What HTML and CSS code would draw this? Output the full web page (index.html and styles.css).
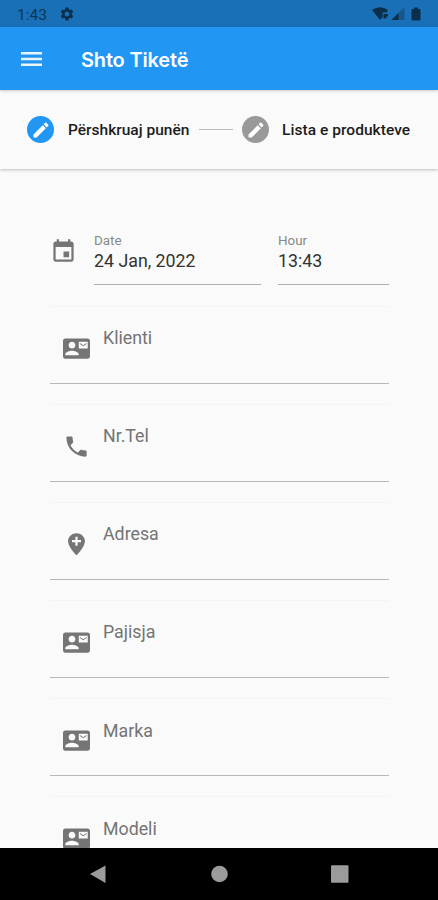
FILE: index.html
```html
<!DOCTYPE html>
<html lang="sq">
<head>
<meta charset="utf-8">
<title>Shto Tiketë</title>
<link rel="stylesheet" href="styles.css">
</head>
<body>
<svg class="defs" width="0" height="0">
  <symbol id="card" viewBox="0 0 24 24"><path d="M21 8V7l-3 2-3-2v1l3 2 3-2zm1-5H2C.9 3 0 3.9 0 5v14c0 1.1.9 2 2 2h20c1.1 0 1.99-.9 1.99-2L24 5c0-1.1-.9-2-2-2zM8 6c1.66 0 3 1.34 3 3s-1.34 3-3 3-3-1.34-3-3 1.34-3 3-3zm6 12H2v-1c0-2 4-3.1 6-3.1s6 1.1 6 3.1v1zm8-6h-8V6h8v6z"/></symbol>
  <symbol id="edit" viewBox="0 0 24 24"><path d="M3 17.25V21h3.75L17.81 9.94l-3.75-3.75L3 17.25zM20.71 7.04c.39-.39.39-1.02 0-1.41l-2.34-2.34c-.39-.39-1.02-.39-1.41 0l-1.83 1.83 3.75 3.75 1.83-1.83z"/></symbol>
</svg>
<div class="screen">
  <div class="status">
    <span class="clock">1:43</span>
    <svg class="gear" viewBox="0 0 24 24"><path d="M19.14 12.94c.04-.3.06-.61.06-.94 0-.32-.02-.64-.07-.94l2.03-1.58c.18-.14.23-.41.12-.61l-1.92-3.32c-.12-.22-.37-.29-.59-.22l-2.39.96c-.5-.38-1.03-.7-1.62-.94l-.36-2.54c-.04-.24-.24-.41-.48-.41h-3.84c-.24 0-.43.17-.47.41l-.36 2.54c-.59.24-1.13.57-1.62.94l-2.39-.96c-.22-.08-.47 0-.59.22L2.74 8.87c-.12.21-.08.47.12.61l2.03 1.58c-.05.3-.09.63-.09.94s.02.64.07.94l-2.03 1.58c-.18.14-.23.41-.12.61l1.92 3.32c.12.22.37.29.59.22l2.39-.96c.5.38 1.03.7 1.62.94l.36 2.54c.05.24.24.41.48.41h3.84c.24 0 .44-.17.47-.41l.36-2.54c.59-.24 1.13-.56 1.62-.94l2.39.96c.22.08.47 0 .59-.22l1.92-3.32c.12-.22.07-.47-.12-.61l-2.01-1.58zM12 15.6c-1.98 0-3.6-1.62-3.6-3.6s1.62-3.6 3.6-3.6 3.6 1.62 3.6 3.6-1.62 3.6-3.6 3.6z"/></svg>
    <svg class="signals" viewBox="0 0 52 16">
      <path d="M1 4Q9-1.5 17 4L15.5 6.5H11.5V11.5L9 14z"/>
      <path d="M12.5 8H17V10.5H15.500V12.5H12.5z"/>
      <path class="weak" d="M33.5 1V14H20.5z"/>
      <path d="M27.5 7V14H20.5z"/>
      <path d="M43 1.5h4v1.500h1.500q1 0 1 1v9.500q0 1-1 1h-7q-1 0-1-1V4q0-1 1-1H43z"/>
    </svg>
  </div>
  <header class="appbar">
    <svg class="menu" viewBox="0 0 21 14"><path d="M0 0h21v2.500H0zM0 5.700h21v2.500H0zM0 11.400h21v2.500H0z"/></svg>
    <h1>Shto Tiketë</h1>
  </header>
  <nav class="stepper">
    <span class="dot active"><svg><use href="#edit"/></svg></span>
    <span class="step first">Përshkruaj punën</span>
    <span class="link"></span>
    <span class="dot"><svg><use href="#edit"/></svg></span>
    <span class="step second">Lista e produkteve</span>
  </nav>
  <main class="form">
    <div class="when">
      <svg class="icon" viewBox="0 0 24 24"><path d="M17 12h-5v5h5v-5zM16 1v2H8V1H6v2H5c-1.110 0-1.990.9-1.990 2L3 19c0 1.100.89 2 2 2h14c1.100 0 2-.9 2-2V5c0-1.100-.9-2-2-2h-1V1h-2zm3 18H5V8h14v11z"/></svg>
      <div class="picker date"><label>Date</label><span>24 Jan, 2022</span></div>
      <div class="picker hour"><label>Hour</label><span>13:43</span></div>
    </div>
    <div class="field"><svg class="icon"><use href="#card"/></svg><span>Klienti</span></div>
    <div class="field"><svg class="icon" viewBox="0 0 24 24"><path d="M6.620 10.790c1.440 2.830 3.760 5.140 6.590 6.590l2.200-2.200c.27-.27.67-.36 1.020-.24 1.120.37 2.330.57 3.570.57.55 0 1 .45 1 1V20c0 .55-.45 1-1 1-9.390 0-17-7.610-17-17 0-.55.45-1 1-1h3.500c.55 0 1 .45 1 1 0 1.250.2 2.450.57 3.570.11.35.03.74-.25 1.020l-2.200 2.200z"/></svg><span>Nr.Tel</span></div>
    <div class="field"><svg class="icon" viewBox="0 0 24 24"><path d="M12 2C8.140 2 4.500 5.140 4.500 9c0 5.250 7.500 12.500 7.500 12.500s7.500-7.250 7.500-12.500c0-3.860-3.640-7-7.500-7zm4 8h-3v3h-2v-3H8V8h3V5h2v3h3v2z"/></svg><span>Adresa</span></div>
    <div class="field"><svg class="icon"><use href="#card"/></svg><span>Pajisja</span></div>
    <div class="field"><svg class="icon"><use href="#card"/></svg><span>Marka</span></div>
    <div class="field"><svg class="icon"><use href="#card"/></svg><span>Modeli</span></div>
  </main>
  <footer class="navbar">
    <svg viewBox="0 0 438 52"><path d="M90 26L105.500 17.500V35z"/><circle cx="219.500" cy="26" r="8.300"/><rect x="331" y="17.300" width="17.500" height="17.500" rx="1"/></svg>
  </footer>
</div>
</body>
</html>
```

FILE: styles.css
```css
* { box-sizing: border-box; }
body { margin: 0; font-family: Roboto, sans-serif; background: #fafafa; }
.defs { display: block; }
.screen { width: 438px; height: 900px; display: flex; flex-direction: column; overflow: hidden; }
.status { flex: none; height: 27px; background: #1a70b7; display: flex; align-items: center; padding: 1px 15px 0 17px; color: #0c3555; }
.clock { font-size: 15.5px; width: 42px; padding-top: 1px; }
.status svg { fill: #0b2e4a; }
.gear { width: 16px; height: 16px; }
.signals { width: 52px; height: 16px; margin-left: auto; }
.status .weak { fill: #165688; }
.appbar { flex: none; height: 63px; background: #2196f3; display: flex; align-items: center; padding: 0 21px; z-index: 2; box-shadow: 0 1px 3px rgba(0,0,0,.2); }
.menu { width: 21px; height: 14px; fill: #e9f6ff; }
h1 { margin: 2px 0 0 39px; font: 600 20px/28px Inter, sans-serif; letter-spacing: -.17px; color: #fff; white-space: nowrap; }
.stepper { flex: none; height: 79px; display: flex; align-items: center; padding-left: 27px; background: #fafafa; z-index: 1; box-shadow: 0 1px 3px rgba(0,0,0,.24); }
.dot { width: 27px; height: 27px; border-radius: 50%; background: #999; display: flex; align-items: center; justify-content: center; flex: none; }
.dot.active { background: #2196f3; }
.dot svg { width: 20px; height: 20px; fill: #fff; }
.step { font-size: 15.5px; font-weight: 500; line-height: 20px; color: #1c1c1c; white-space: nowrap; flex: none; margin-left: 14px; padding-top: 1px; }
.step.first { width: 122px; }
.step.second { width: 130px; margin-left: 13px; letter-spacing: .05px; }
.link { width: 34px; height: 1px; background: #bdbdbd; margin: 0 9px; flex: none; }
.form { flex: 1; min-height: 0; overflow: hidden; padding: 60px 49px 0 50px; }
.icon { width: 27px; height: 27px; fill: #757575; flex: none; display: block; }
.when { height: 76.5px; display: flex; align-items: flex-start; }
.when .icon { margin: 9px 17.5px 0 -.5px; }
.picker { height: 56px; border-bottom: 1px solid #b0b0b0; display: flex; flex-direction: column; padding-top: 4px; color: #333; }
.picker label { font-size: 13.4px; line-height: 16px; color: #888; }
.picker span { font-size: 17.8px; line-height: 24px; }
.date { width: 167px; margin-right: 17px; }
.hour { width: 111px; }
.field { height: 78px; margin-bottom: 20.15px; border-top: 1px solid #f4f4f4; border-bottom: 1px solid #b8b8b8; display: flex; align-items: flex-start; color: #747474; }
.field .icon { margin: 28px 13.5px 0 12.5px; }
.field span { font-size: 17.8px; line-height: 24px; padding-top: 19.5px; }
.navbar { flex: none; height: 52.5px; background: #000; }
.navbar svg { width: 438px; height: 52px; display: block; fill: #9b9b9b; }
```
